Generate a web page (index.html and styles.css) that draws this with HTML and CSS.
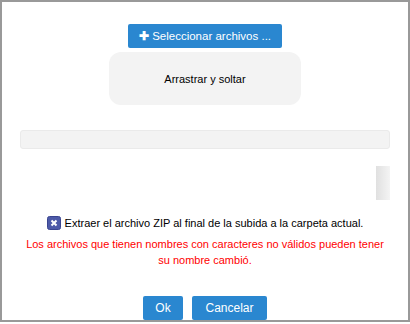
FILE: index.html
```html
<!DOCTYPE html>
<html lang="es">
<head>
    <meta charset="UTF-8">
    <title>Subir archivos</title>
    <link rel="stylesheet" href="styles.css">
</head>
<body>
    <div class="dialog">
        <div class="picker">
            <button class="btn btn-select"><span class="plus">&#10010;</span> Seleccionar archivos ...</button>
            <div class="dropzone">Arrastrar y soltar</div>
        </div>
        <div class="progress"></div>
        <div class="list">
            <div class="scroller"></div>
        </div>
        <label class="extract">
            <span class="check">
                <svg width="14" height="14" viewBox="0 0 14 14">
                    <rect x="0.5" y="0.5" width="13" height="13" rx="2" fill="#4d5aa8" stroke="#3a4590"/>
                    <path d="M4.5 4.5 L9.5 9.5 M9.5 4.5 L4.5 9.5" stroke="#fff" stroke-width="2"/>
                </svg>
            </span>
            Extraer el archivo ZIP al final de la subida a la carpeta actual.
        </label>
        <p class="warning">Los archivos que tienen nombres con caracteres no válidos pueden tener su nombre cambió.</p>
        <div class="actions">
            <button class="btn btn-ok">Ok</button>
            <button class="btn btn-cancel">Cancelar</button>
        </div>
    </div>
</body>
</html>
```

FILE: styles.css
```css
body {
    margin: 0;
    font-family: "Liberation Sans", Arial, sans-serif;
    font-size: 12px;
    color: #000;
}
.dialog {
    width: 406px;
    height: 318px;
    border: 2px solid #999;
    background: #fff;
    display: flex;
    flex-direction: column;
}
.btn {
    background: #2a87d0;
    color: #fff;
    border: none;
    border-radius: 2px;
    font-family: inherit;
    font-size: 12px;
    height: 24px;
    padding: 0 12px;
}
.picker {
    display: flex;
    flex-direction: column;
    align-items: center;
    margin-top: 22px;
    gap: 4px;
}
.btn-select {
    width: 154px;
    padding: 0;
    font-size: 11.5px;
}
.plus {
    font-weight: bold;
}
.dropzone {
    width: 192px;
    height: 53px;
    background: #f3f3f3;
    border-radius: 12px;
    display: flex;
    align-items: center;
    justify-content: center;
    font-size: 11px;
}
.progress {
    margin: 25px 18px 0;
    height: 17px;
    background: #f3f3f3;
    border: 1px solid #eaeaea;
    border-radius: 3px;
}
.list {
    display: flex;
    justify-content: flex-end;
    margin: 17px 18px 0;
    height: 48px;
}
.scroller {
    width: 14px;
    height: 34px;
    background: linear-gradient(to right, #e0e0e0, #f4f4f4);
}
.extract {
    display: flex;
    align-items: center;
    justify-content: center;
    gap: 4px;
    margin-top: 2px;
    font-size: 11px;
}
.check {
    display: flex;
}
.warning {
    color: #f00;
    font-size: 11px;
    text-align: center;
    margin: 6px 20px 0;
    line-height: 16px;
}
.actions {
    margin-top: auto;
    display: flex;
    justify-content: center;
    gap: 9px;
    margin-bottom: 0;
}
.btn-ok {
    width: 40px;
    padding: 0;
}
.btn-cancel {
    width: 75px;
    padding: 0;
}
```
